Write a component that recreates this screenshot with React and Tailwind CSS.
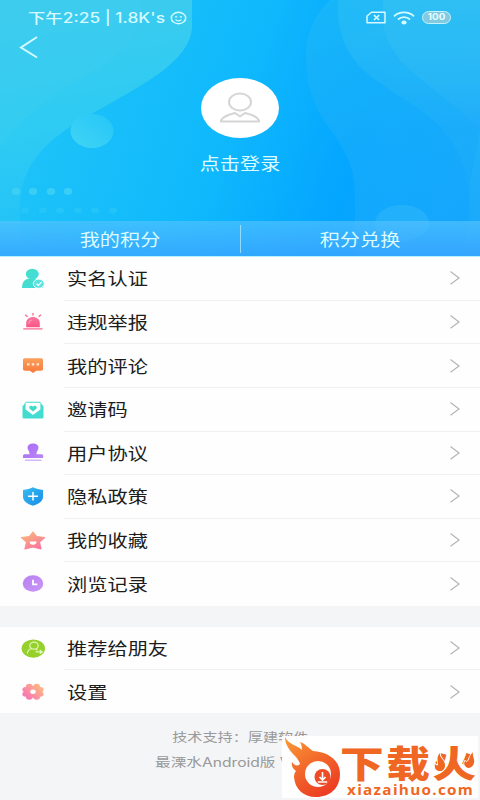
import React from 'react';

const iconClass = 'w-6 h-6 shrink-0';

function UserIcon(){
  return (
    <svg viewBox="0 0 24 24" className={iconClass}>
      <defs><linearGradient id="gUser" x1="0" y1="0" x2="1" y2="1"><stop offset="0" stopColor="#48dfc0"/><stop offset="1" stopColor="#3fdbe4"/></linearGradient></defs>
      <ellipse cx="11.300" cy="7" rx="6.500" ry="5.200" fill="url(#gUser)"/>
      <path d="M1 21c0-5.500 2.200-8.600 6.500-9.300h7.600c4.300.7 6.500 3.800 6.500 9.300z" fill="url(#gUser)"/>
      <ellipse cx="17.800" cy="16.700" rx="5.500" ry="4.600" fill="#5be2df" stroke="#fff" strokeWidth="1"/>
      <path d="M15.500 16.700l1.900 1.700 3.200-3.200" stroke="#fff" strokeWidth="1.200" fill="none"/>
    </svg>
  );
}

function AlarmIcon(){
  return (
    <svg viewBox="0 0 24 24" className={iconClass}>
      <defs><linearGradient id="gAlarm" x1="0" y1="0" x2="0" y2="1"><stop offset="0" stopColor="#fa78a0"/><stop offset="1" stopColor="#fb5585"/></linearGradient></defs>
      <path d="M5.200 17.200v-4.200c0-3.600 2.900-6 6.800-6s6.800 2.400 6.800 6v4.200z" fill="url(#gAlarm)"/>
      <path d="M2.300 18.900h19.200M12 3v2.600M4.200 4.700l2.400 2M20 4.700l-2.400 2" stroke="#f9658e" strokeWidth="1.300" fill="none"/>
      <path d="M8 13.500c0-2 .8-3 2.500-3.400" stroke="#ffc2d4" strokeWidth="1" fill="none"/>
    </svg>
  );
}

function CommentIcon(){
  return (
    <svg viewBox="0 0 24 24" className={iconClass}>
      <defs><linearGradient id="gComment" x1="0" y1="0" x2="0" y2="1"><stop offset="0" stopColor="#f9a05a"/><stop offset="1" stopColor="#f9793c"/></linearGradient></defs>
      <path d="M4 4.300h16c1.200 0 2 .6 2 1.600v9.200c0 1-.8 1.600-2 1.600h-4.800L12 19l-3.200-2.300H4c-1.200 0-2-.6-2-1.600V5.900c0-1 .8-1.600 2-1.600z" fill="url(#gComment)"/>
      <path d="M6 9.200h2.500v2.200H6zM10.800 9.200h2.500v2.200h-2.500zM15.600 9.200h2.500v2.200h-2.500z" fill="#ffe6d2"/>
    </svg>
  );
}

function InviteIcon(){
  return (
    <svg viewBox="0 0 24 24" className={iconClass}>
      <path d="M1.500 8.500L5 3.800h14l3.500 4.700V19c0 1-.7 1.600-1.800 1.600H3.300c-1.100 0-1.800-.6-1.800-1.600z" fill="#42ddd0"/>
      <path d="M4.600 4.800h14.800v6.800L12 16.900l-7.400-5.300z" fill="#fff"/>
      <path d="M12 13.400L8.700 10.700c-1.700-2 1.600-4 3.300-2 1.700-2 5 0 3.300 2z" fill="#3fdac8"/>
    </svg>
  );
}

function StampIcon(){
  return (
    <svg viewBox="0 0 24 24" className={iconClass}>
      <defs><linearGradient id="gStamp" x1="0" y1="0" x2="1" y2="1"><stop offset="0" stopColor="#a76cf6"/><stop offset="1" stopColor="#bb87f5"/></linearGradient></defs>
      <path d="M12 2.500c3.400 0 5.500 1.700 5.500 4.200 0 2.100-2 3.200-2 5.500v1h4.800c1.200 0 1.900.7 1.900 1.700v2.200H2v-2.200c0-1 .7-1.700 1.900-1.700h4.600v-1c0-2.300-2-3.400-2-5.500 0-2.500 2.100-4.200 5.500-4.200z" fill="url(#gStamp)"/>
      <path d="M4 19.200h16.500" stroke="#c69ff5" strokeWidth="1.100"/>
    </svg>
  );
}

function ShieldIcon(){
  return (
    <svg viewBox="0 0 24 24" className={iconClass}>
      <defs><linearGradient id="gShield" x1="0" y1="0" x2="1" y2="1"><stop offset="0" stopColor="#36bdf2"/><stop offset="1" stopColor="#198be6"/></linearGradient></defs>
      <path d="M12 2.300c3 1.500 6 2.300 10 2.700v6.500c0 4.800-4.200 7.200-10 9.300C6.200 18.700 2 16.300 2 11.500V5c4-.4 7-1.200 10-2.700z" fill="url(#gShield)"/>
      <path d="M12 7v8.400M7 11.200h10" stroke="#fff" strokeWidth="1.500"/>
    </svg>
  );
}

function StarIcon(){
  return (
    <svg viewBox="0 0 24 24" className={iconClass}>
      <defs><linearGradient id="gStar" x1="0" y1="0" x2=".6" y2="1"><stop offset="0" stopColor="#f9bd78"/><stop offset="1" stopColor="#fa789c"/></linearGradient></defs>
      <path d="M12 3l3.600 4.600 8 .9-5.200 4.500 1.600 7L12 18l-8 2 1.600-7L.4 8.500l8-.9z" fill="url(#gStar)" stroke="url(#gStar)" strokeWidth="1.200" strokeLinejoin="round"/>
      <path d="M8.600 12.500h7c-.2 2.100-1.600 3.200-3.500 3.200s-3.300-1.100-3.500-3.200z" fill="#fff"/>
    </svg>
  );
}

function ClockIcon(){
  return (
    <svg viewBox="0 0 24 24" className={iconClass}>
      <defs><linearGradient id="gClock" x1="0" y1="0" x2="1" y2="1"><stop offset="0" stopColor="#b780f3"/><stop offset="1" stopColor="#cb96f4"/></linearGradient></defs>
      <ellipse cx="12" cy="11.500" rx="10.300" ry="8.200" fill="url(#gClock)"/>
      <path d="M12 7.800v4.500h4.300" stroke="#fff" strokeWidth="1.800" fill="none"/>
    </svg>
  );
}

function ShareIcon(){
  return (
    <svg viewBox="0 0 24 24" className={iconClass}>
      <ellipse cx="12.300" cy="11.600" rx="11.700" ry="9.200" fill="#96d02d"/>
      <ellipse cx="13" cy="8.700" rx="4.200" ry="3.500" stroke="#e2f8b7" strokeWidth="1.200" fill="none"/>
      <path d="M6.300 16.500c.3-2.600 2-4.500 4.700-5M14.800 12l1.700 1.200M14.500 14.900h6.800M18.700 13l2.600 1.900-2.600 1.800" stroke="#e2f8b7" strokeWidth="1.200" fill="none"/>
    </svg>
  );
}

function SettingIcon(){
  return (
    <svg viewBox="0 0 24 24" className={iconClass}>
      <defs><linearGradient id="gSet" gradientUnits="userSpaceOnUse" x1="20" y1="4" x2="5" y2="20"><stop offset="0" stopColor="#fcbf7b"/><stop offset="1" stopColor="#f86fb9"/></linearGradient></defs>
      <g fill="url(#gSet)">
        <ellipse cx="12" cy="11.800" rx="7.500" ry="6"/>
        <ellipse cx="8.300" cy="6.500" rx="3.300" ry="2.700"/>
        <ellipse cx="15.700" cy="6.500" rx="3.300" ry="2.700"/>
        <ellipse cx="4.500" cy="9.500" rx="3.100" ry="2.600"/>
        <ellipse cx="19.500" cy="9.500" rx="3.100" ry="2.600"/>
        <ellipse cx="4.500" cy="14.100" rx="3.100" ry="2.600"/>
        <ellipse cx="19.500" cy="14.100" rx="3.100" ry="2.600"/>
        <ellipse cx="8.300" cy="17.100" rx="3.300" ry="2.700"/>
        <ellipse cx="15.700" cy="17.100" rx="3.300" ry="2.700"/>
      </g>
      <ellipse cx="12" cy="11.800" rx="2.700" ry="2.200" fill="#fff"/>
    </svg>
  );
}

const menu = [
  { label:'实名认证', Icon:UserIcon },
  { label:'违规举报', Icon:AlarmIcon },
  { label:'我的评论', Icon:CommentIcon },
  { label:'邀请码', Icon:InviteIcon },
  { label:'用户协议', Icon:StampIcon },
  { label:'隐私政策', Icon:ShieldIcon },
  { label:'我的收藏', Icon:StarIcon },
  { label:'浏览记录', Icon:ClockIcon },
];

const more = [
  { label:'推荐给朋友', Icon:ShareIcon },
  { label:'设置', Icon:SettingIcon },
];

function Row({ label, Icon, last }){
  return (
    <div className="flex flex-1 items-stretch pl-[21px]">
      <div className="flex items-center w-[43px]"><Icon /></div>
      <div className={last ? 'flex flex-1 items-center justify-between pl-[3px] pr-[19px]' : 'flex flex-1 items-center justify-between pl-[3px] pr-[19px] border-b border-[#f0f0f1]'}>
        <span className="text-[16.5px] leading-6 text-[#1c1c1c] origin-left scale-x-[1.225] whitespace-nowrap">{label}</span>
        <svg viewBox="0 0 12 16" className="w-3 h-4"><path d="M1.500 1.500L10 8l-8.500 6.300" stroke="#b5b5b5" strokeWidth="1.200" fill="none"/></svg>
      </div>
    </div>
  );
}

function HeaderArt(){
  return (
    <svg viewBox="0 0 480 256" className="absolute left-0 top-0 w-[480px] h-[256px]">
      <defs>
        <linearGradient id="base" gradientUnits="userSpaceOnUse" x1="60" y1="80" x2="450" y2="220"><stop offset="0" stopColor="#1cc2f8"/><stop offset=".4" stopColor="#10b9fc"/><stop offset=".72" stopColor="#04a6ff"/><stop offset="1" stopColor="#14a0fd"/></linearGradient>
        <linearGradient id="left" gradientUnits="userSpaceOnUse" x1="40" y1="0" x2="90" y2="250"><stop offset="0" stopColor="#3ecbee"/><stop offset=".5" stopColor="#2ecbf3"/><stop offset="1" stopColor="#1fc0f9"/></linearGradient>
        <linearGradient id="ball" x1="1" y1="0" x2="0" y2="1"><stop offset="0" stopColor="#25c6f8"/><stop offset="1" stopColor="#41d4f4"/></linearGradient>
        <linearGradient id="right" x1="0" y1="0" x2="0" y2="1"><stop offset="0" stopColor="#1cb9f8"/><stop offset=".5" stopColor="#18aefb"/><stop offset="1" stopColor="#14a8fd"/></linearGradient>
        <linearGradient id="mid" x1="0" y1="0" x2="0" y2="1"><stop offset="0" stopColor="#2abdf5"/><stop offset=".35" stopColor="#1db0f9"/><stop offset=".6" stopColor="#12a4fc"/><stop offset="1" stopColor="#14a2fd"/></linearGradient>
        <linearGradient id="far" x1="0" y1="0" x2="0" y2="1"><stop offset="0" stopColor="#32c1f3"/><stop offset=".6" stopColor="#2ab8f6"/><stop offset="1" stopColor="#1ea9fb"/></linearGradient>
      </defs>
      <path d="M0 0h480v256H0z" fill="url(#base)"/>
      <path d="M0 0h192v28c-2 22-22 40-52 58-18 11-32 18-50 29-36 20-60 40-68 73-4 20-2 40 1 68H0z" fill="url(#left)"/>
      <path d="M142 0c0 30-12 48-40 66C66 90 20 112 0 150V0z" fill="#3fd1ef" opacity=".25"/>
      <path d="M330 0c-18 18-25 36-24 60 1 30 8 46 22 66 20 28 27 44 27 70v60h125V0z" fill="url(#right)" opacity=".7"/>
      <path d="M338 0c-2 42 14 64 45 85 38 26 64 38 78 74 11 28 11 50 2 97h17V0z" fill="url(#far)" opacity=".45"/>
      <path d="M343 35c5 22 18 38 40 50 38 26 64 38 78 74 4 10 7 20 8 30l11-60c-24-26-48-38-68-58-18-17-24-28-28-45z" fill="url(#mid)" opacity=".35"/>
      <path d="M383 0c-3 32 6 52 32 74 24 20 46 36 65 58V0z" fill="url(#far)" opacity=".75"/>
      <ellipse cx="92" cy="131" rx="21.500" ry="17" fill="url(#ball)"/>
      <ellipse cx="402" cy="223" rx="27" ry="18" fill="#2fb6fa" opacity=".6"/>
      <g fill="#42d2f5" opacity=".8">
        {[16,33,51,68].map(x => <ellipse key={x} cx={x} cy="191.500" rx="4.200" ry="3.400"/>)}
      </g>
      <g fill="#2cc9f8" opacity=".6">
        {[25,43,60,78,95,113].map(x => <ellipse key={x} cx={x} cy="210.500" rx="4" ry="3"/>)}
      </g>
    </svg>
  );
}

function StatusBar(){
  return (
    <div className="flex items-center justify-between h-[35px] pl-[28px] pr-[29px] text-[#d6faff]">
      <div className="flex items-center">
        <div className="w-[142px] flex items-center">
          <span className="block whitespace-nowrap origin-left scale-x-[1.24] text-[14px] font-medium leading-4 font-['Inter','Noto_Sans_CJK_SC',sans-serif]">下午2:25 | 1.8K's</span>
        </div>
        <svg viewBox="0 0 18 14" className="w-[18px] h-[14px]" fill="none" stroke="currentColor">
          <ellipse cx="8.500" cy="7" rx="7.200" ry="5.700" strokeWidth="1.500"/>
          <path d="M5 5.800h2.200M9.800 5.800H12M5.500 8.700c1.500 1.500 4.500 1.500 6 0" strokeWidth="1.200"/>
        </svg>
      </div>
      <div className="flex items-center gap-[7px]">
        <svg viewBox="0 0 20 13" className="w-5 h-[13px]" fill="none" stroke="currentColor">
          <path d="M5.500 1.200H19v10.600H1V5z" strokeWidth="1.500" strokeLinejoin="round"/>
          <path d="M8 4.200l5.200 4.800M13.200 4.200L8 9" strokeWidth="1.700"/>
        </svg>
        <svg viewBox="0 0 22 14" className="w-[22px] h-[14px]" fill="none" stroke="currentColor">
          <path d="M1 5.300c5.500-5.200 14.500-5.200 20 0M5 8.500c3.400-3.200 8.600-3.200 12 0" strokeWidth="1.800"/>
          <ellipse cx="11" cy="11.500" rx="2.600" ry="1.900" fill="currentColor" stroke="none"/>
        </svg>
        <div className="flex items-center justify-center w-[29px] h-[13px] rounded-full border-[1.500px] border-[#c4f3fb] bg-[#82c9e2]">
          <span className="text-[8.500px] leading-[9px] font-bold scale-x-[1.15] text-[#eaffff] font-['Inter',sans-serif]">100</span>
        </div>
      </div>
    </div>
  );
}

function Watermark(){
  return (
    <div className="absolute left-[282px] top-[736px] w-[196px] h-[62px] bg-white/95 flex">
      <svg viewBox="0 0 58 62" className="w-[58px] h-[62px] shrink-0">
        <defs><linearGradient id="fire" x1="0" y1="0" x2=".6" y2="1"><stop offset="0" stopColor="#f99b35"/><stop offset=".5" stopColor="#f36b2b"/><stop offset="1" stopColor="#ed3f24"/></linearGradient></defs>
        <path d="M3 1c4 8 12 8 17 13 0-4-1-6-2-8 6 2 8 6 13 9 15 1 27 9 27 23 0 14-10 23-24 23-13 0-21-8-22-20 0-3 1-5 2-6-3-2-5-5-4-9 2 3 4 4 7 3 2-1 0-4-3-8C8 15 3 9 3 1z" fill="url(#fire)"/>
        <circle cx="36" cy="38" r="13" fill="#fff"/>
        <circle cx="40.500" cy="41" r="8" fill="#ee4c27"/>
        <path d="M40.500 36v7M37.500 41l3 3 3-3M35.800 46h9.400" stroke="#fff" strokeWidth="1.600" fill="none"/>
      </svg>
      <div className="relative flex flex-col items-start text-[#ef6722]">
        <span className="h-[47px] pt-[8px] text-[37px] leading-[37px] font-black tracking-[2.200px] whitespace-nowrap origin-left scale-x-[1.18]">下载火</span>
        <span className="ml-[7px] text-[14px] leading-[14px] font-bold tracking-[1.200px] whitespace-nowrap origin-left scale-x-[1.09] font-['Open_Sans',sans-serif]">xiazaihuo.com</span>
        {/* flames on both sides of 火 */}
        <svg viewBox="0 0 44 24" className="absolute left-[92px] top-[15px] w-[44px] h-6">
          <g fill="#ef6722" stroke="#fff" strokeWidth="1.600" paintOrder="stroke">
            <path d="M8 2c-1 5 5 7 5 12 0 4-2 6-5 6-4 0-6-3-5-7 1 1 2 2 3 1C6 10 4 6 8 2z"/>
            <path d="M41 1c-1 4 2 7 1 11-1 4-4 5-6 5-3-1-5-4-3-7 1 1 2 1 3 0 2-3 1-5 5-9z"/>
          </g>
        </svg>
      </div>
    </div>
  );
}

export default function App(){
  return (
    <div className="relative flex flex-col w-[480px] h-[800px] overflow-hidden bg-[#f4f5f7] font-['Noto_Sans_CJK_SC',sans-serif]">
      <header className="relative h-[257px] shrink-0 border-b border-[#b4f3ff]">
        <HeaderArt />
        <div className="relative flex flex-col h-full">
          <StatusBar />
          <div className="relative flex flex-col items-center flex-1">
            <svg viewBox="0 0 20 24" className="absolute left-[19px] top-0 w-5 h-6"><path d="M18 2L2 12.500 18 22.500" stroke="#d4faff" strokeWidth="2" fill="none"/></svg>
            <div className="mt-[43px] w-[78px] h-[60px] rounded-[50%] bg-white flex items-center justify-center">
              <svg viewBox="0 0 42 32" className="w-[42px] h-8" fill="none" stroke="#d5d5d5" strokeWidth="2">
                <ellipse cx="21" cy="10" rx="11" ry="8.500"/>
                <path d="M16 21c-6 1.500-12 3-14 7.500v1h38v-1c-2-4.500-8-6-14-7.500l-5 3.500z" strokeLinejoin="round"/>
              </svg>
            </div>
            <span className="mt-[13px] text-[16.500px] leading-6 text-[#dcfbff] scale-x-[1.22]">点击登录</span>
          </div>
          <div className="flex items-center h-[35px] bg-gradient-to-b from-[#55c3ff]/65 to-[#3aa5ff]/80 text-[16.500px] text-[#dcfbff]">
            <div className="flex-1 flex justify-center"><span className="scale-x-[1.22] leading-6">我的积分</span></div>
            <div className="w-px h-7 bg-[#92dcff]" />
            <div className="flex-1 flex justify-center"><span className="scale-x-[1.22] leading-6">积分兑换</span></div>
          </div>
        </div>
      </header>
      <section className="flex flex-col h-[349px] shrink-0 bg-[#fefefe]">
        {menu.map((m,i) => <Row key={m.label} label={m.label} Icon={m.Icon} last={i===menu.length-1} />)}
      </section>
      <section className="flex flex-col h-[86px] shrink-0 mt-[21px] bg-[#fefefe]">
        {more.map((m,i) => <Row key={m.label} label={m.label} Icon={m.Icon} last={i===more.length-1} />)}
      </section>
      <footer className="flex flex-col items-center pt-[12px] text-[12.500px] text-[#999] whitespace-nowrap font-['Inter','Noto_Sans_CJK_SC',sans-serif]">
        <span className="leading-[25px] scale-x-[1.21]">技术支持：厚建软件</span>
        <span className="leading-[26px] scale-x-[1.25]">最溧水Android版 V1.0.0</span>
      </footer>
      <Watermark />
    </div>
  );
}
